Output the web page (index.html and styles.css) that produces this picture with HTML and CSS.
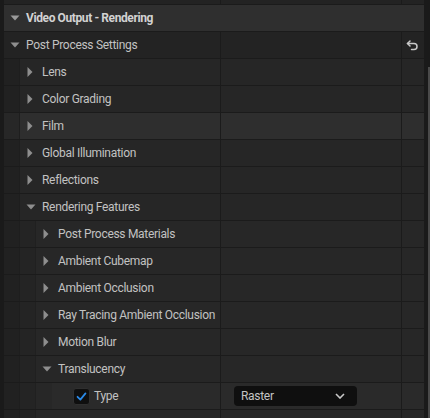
FILE: index.html
```html
<!DOCTYPE html>
<html>
<head>
<meta charset="utf-8">
<link rel="stylesheet" href="styles.css">
</head>
<body>
<div class="panel">
  <div class="row top l0"><div class="left"><div class="name"></div></div><div class="val"></div><div class="reset"></div></div>

  <div class="cat">
    <svg class="arrow" viewBox="0 0 10 10"><polygon points="0.5,2.5 9.5,2.5 5,7.5" class="tri"/></svg>
    <span>Video Output - Rendering</span>
  </div>

  <div class="row l0">
    <div class="left"><div class="name"><svg class="arrow" viewBox="0 0 10 10"><polygon points="0.5,2.5 9.5,2.5 5,7.5" class="tri"/></svg>Post Process Settings</div></div>
    <div class="val"></div>
    <div class="reset"><svg class="undo" viewBox="0 0 12 11"><path d="M1.5 3.5 H8 A3 3 0 0 1 8 9.5 H5.5" /><path d="M4 1 L1.5 3.5 L4 6" /></svg></div>
  </div>

  <div class="row l1">
    <div class="left"><div class="ind i1"></div><div class="name"><svg class="arrow" viewBox="0 0 10 10"><polygon points="1.5,0 6.5,5 1.5,10" class="tri"/></svg>Lens</div></div>
    <div class="val"></div><div class="reset"></div>
  </div>
  <div class="row l1">
    <div class="left"><div class="ind i1"></div><div class="name"><svg class="arrow" viewBox="0 0 10 10"><polygon points="1.5,0 6.5,5 1.5,10" class="tri"/></svg>Color Grading</div></div>
    <div class="val"></div><div class="reset"></div>
  </div>
  <div class="row l1 hover">
    <div class="left"><div class="ind i1"></div><div class="name"><svg class="arrow" viewBox="0 0 10 10"><polygon points="1.5,0 6.5,5 1.5,10" class="tri"/></svg>Film</div></div>
    <div class="val"></div><div class="reset"></div>
  </div>
  <div class="row l1">
    <div class="left"><div class="ind i1"></div><div class="name"><svg class="arrow" viewBox="0 0 10 10"><polygon points="1.5,0 6.5,5 1.5,10" class="tri"/></svg>Global Illumination</div></div>
    <div class="val"></div><div class="reset"></div>
  </div>
  <div class="row l1">
    <div class="left"><div class="ind i1"></div><div class="name"><svg class="arrow" viewBox="0 0 10 10"><polygon points="1.5,0 6.5,5 1.5,10" class="tri"/></svg>Reflections</div></div>
    <div class="val"></div><div class="reset"></div>
  </div>
  <div class="row l1">
    <div class="left"><div class="ind i1"></div><div class="name"><svg class="arrow" viewBox="0 0 10 10"><polygon points="0.5,2.5 9.5,2.5 5,7.5" class="tri"/></svg>Rendering Features</div></div>
    <div class="val"></div><div class="reset"></div>
  </div>

  <div class="row l2">
    <div class="left"><div class="ind i1"></div><div class="ind i2"></div><div class="name"><svg class="arrow" viewBox="0 0 10 10"><polygon points="1.5,0 6.5,5 1.5,10" class="tri"/></svg>Post Process Materials</div></div>
    <div class="val"></div><div class="reset"></div>
  </div>
  <div class="row l2">
    <div class="left"><div class="ind i1"></div><div class="ind i2"></div><div class="name"><svg class="arrow" viewBox="0 0 10 10"><polygon points="1.5,0 6.5,5 1.5,10" class="tri"/></svg>Ambient Cubemap</div></div>
    <div class="val"></div><div class="reset"></div>
  </div>
  <div class="row l2">
    <div class="left"><div class="ind i1"></div><div class="ind i2"></div><div class="name"><svg class="arrow" viewBox="0 0 10 10"><polygon points="1.5,0 6.5,5 1.5,10" class="tri"/></svg>Ambient Occlusion</div></div>
    <div class="val"></div><div class="reset"></div>
  </div>
  <div class="row l2">
    <div class="left"><div class="ind i1"></div><div class="ind i2"></div><div class="name"><svg class="arrow" viewBox="0 0 10 10"><polygon points="1.5,0 6.5,5 1.5,10" class="tri"/></svg>Ray Tracing Ambient Occlusion</div></div>
    <div class="val"></div><div class="reset"></div>
  </div>
  <div class="row l2">
    <div class="left"><div class="ind i1"></div><div class="ind i2"></div><div class="name"><svg class="arrow" viewBox="0 0 10 10"><polygon points="1.5,0 6.5,5 1.5,10" class="tri"/></svg>Motion Blur</div></div>
    <div class="val"></div><div class="reset"></div>
  </div>
  <div class="row l2">
    <div class="left"><div class="ind i1"></div><div class="ind i2"></div><div class="name"><svg class="arrow" viewBox="0 0 10 10"><polygon points="0.5,2.5 9.5,2.5 5,7.5" class="tri"/></svg>Translucency</div></div>
    <div class="val"></div><div class="reset"></div>
  </div>

  <div class="row l3">
    <div class="left"><div class="ind i1"></div><div class="ind i2"></div><div class="ind i3"></div><div class="name"><span class="spacer"></span><span class="check"><svg viewBox="0 0 17 17"><path d="M4 8.8 L7.2 12 L13 5" /></svg></span>Type</div></div>
    <div class="val"><div class="combo"><span>Raster</span><svg class="chev" viewBox="0 0 10 6"><path d="M1 1 L5 5 L9 1" /></svg></div></div>
    <div class="reset"></div>
  </div>

  <div class="row l2">
    <div class="left"><div class="ind i1"></div><div class="ind i2"></div><div class="name"></div></div>
    <div class="val"></div><div class="reset"></div>
  </div>
</div>
<div class="scroll"><div class="thumb"></div></div>
</body>
</html>
```
FILE: styles.css
```css
html, body {
  margin: 0;
  padding: 0;
}
body {
  width: 430px;
  height: 418px;
  overflow: hidden;
  background: #1a1a1a;
  font-family: Roboto, "Noto Sans", sans-serif;
  font-size: 12px;
  letter-spacing: -0.3px;
  color: #c2c2c2;
  display: flex;
}
.panel {
  margin-left: 4px;
  width: 420px;
  display: flex;
  flex-direction: column;
  flex: none;
}
.scroll {
  width: 6px;
  flex: none;
  padding: 67px 0 0 4px;
  box-sizing: border-box;
}
.thumb {
  width: 2px;
  height: 100%;
  background: #4a4a4a;
}
.row {
  display: flex;
  height: 26px;
  flex: none;
  border-bottom: 1px solid #1b1b1b;
}
.row.top {
  height: 4px;
}
.left {
  width: 216px;
  display: flex;
  border-right: 1px solid #1b1b1b;
  flex: none;
}
.ind {
  width: 16px;
  flex: none;
  box-sizing: border-box;
}
.i1 {
  background: #212121;
  border-right: 1px solid #1e1e1e;
}
.i2 {
  background: #242424;
  border-right: 1px solid #202020;
}
.i3 {
  background: #272727;
}
.name {
  flex: 1;
  display: flex;
  align-items: center;
  padding-left: 6px;
  white-space: nowrap;
  overflow: hidden;
}
.val {
  width: 180px;
  flex: none;
  display: flex;
  align-items: center;
  border-right: 1px solid #1b1b1b;
}
.reset {
  width: 22px;
  flex: none;
  display: flex;
  align-items: center;
  justify-content: center;
}
.l0 .name, .l0 .val, .l0 .reset { background: #232323; }
.l1 .name, .l1 .val, .l1 .reset { background: #262626; }
.l2 .name, .l2 .val, .l2 .reset { background: #272727; }
.l3 .name, .l3 .val, .l3 .reset { background: #2a2a2a; }
.hover .name, .hover .val, .hover .reset { background: #2e2e2e; }
.hover .i1 { background: #272727; }

.arrow {
  width: 10px;
  height: 10px;
  margin-right: 6px;
  flex: none;
}
.tri {
  fill: #8e8e8e;
}
.cat {
  height: 26px;
  flex: none;
  display: flex;
  align-items: center;
  padding-left: 6px;
  background: #2f2f2f;
  border-bottom: 1px solid #1b1b1b;
  font-weight: bold;
  letter-spacing: -0.4px;
  color: #d2d2d2;
}
.cat .tri {
  fill: #9a9a9a;
}
.undo {
  width: 12px;
  height: 11px;
  margin-left: -2px;
  fill: none;
  stroke: #c8c8c8;
  stroke-width: 1.5;
  stroke-linecap: round;
  stroke-linejoin: round;
}
.spacer {
  width: 15px;
  flex: none;
}
.check {
  width: 17px;
  height: 17px;
  box-sizing: border-box;
  background: #0f0f0f;
  border: 1px solid #2f2f2f;
  border-radius: 3px;
  margin-right: 4px;
  flex: none;
  display: flex;
}
.check svg {
  width: 15px;
  height: 15px;
  fill: none;
  stroke: #2a8ae8;
  stroke-width: 2;
  stroke-linecap: round;
  stroke-linejoin: round;
}
.combo {
  margin-left: 13px;
  width: 123px;
  height: 20px;
  box-sizing: border-box;
  background: #0f0f0f;
  border-radius: 4px;
  display: flex;
  align-items: center;
  justify-content: space-between;
  padding: 0 12px 0 7px;
  color: #c4c4c4;
}
.chev {
  width: 10px;
  height: 6px;
  fill: none;
  stroke: #c8c8c8;
  stroke-width: 1.6;
}
```
